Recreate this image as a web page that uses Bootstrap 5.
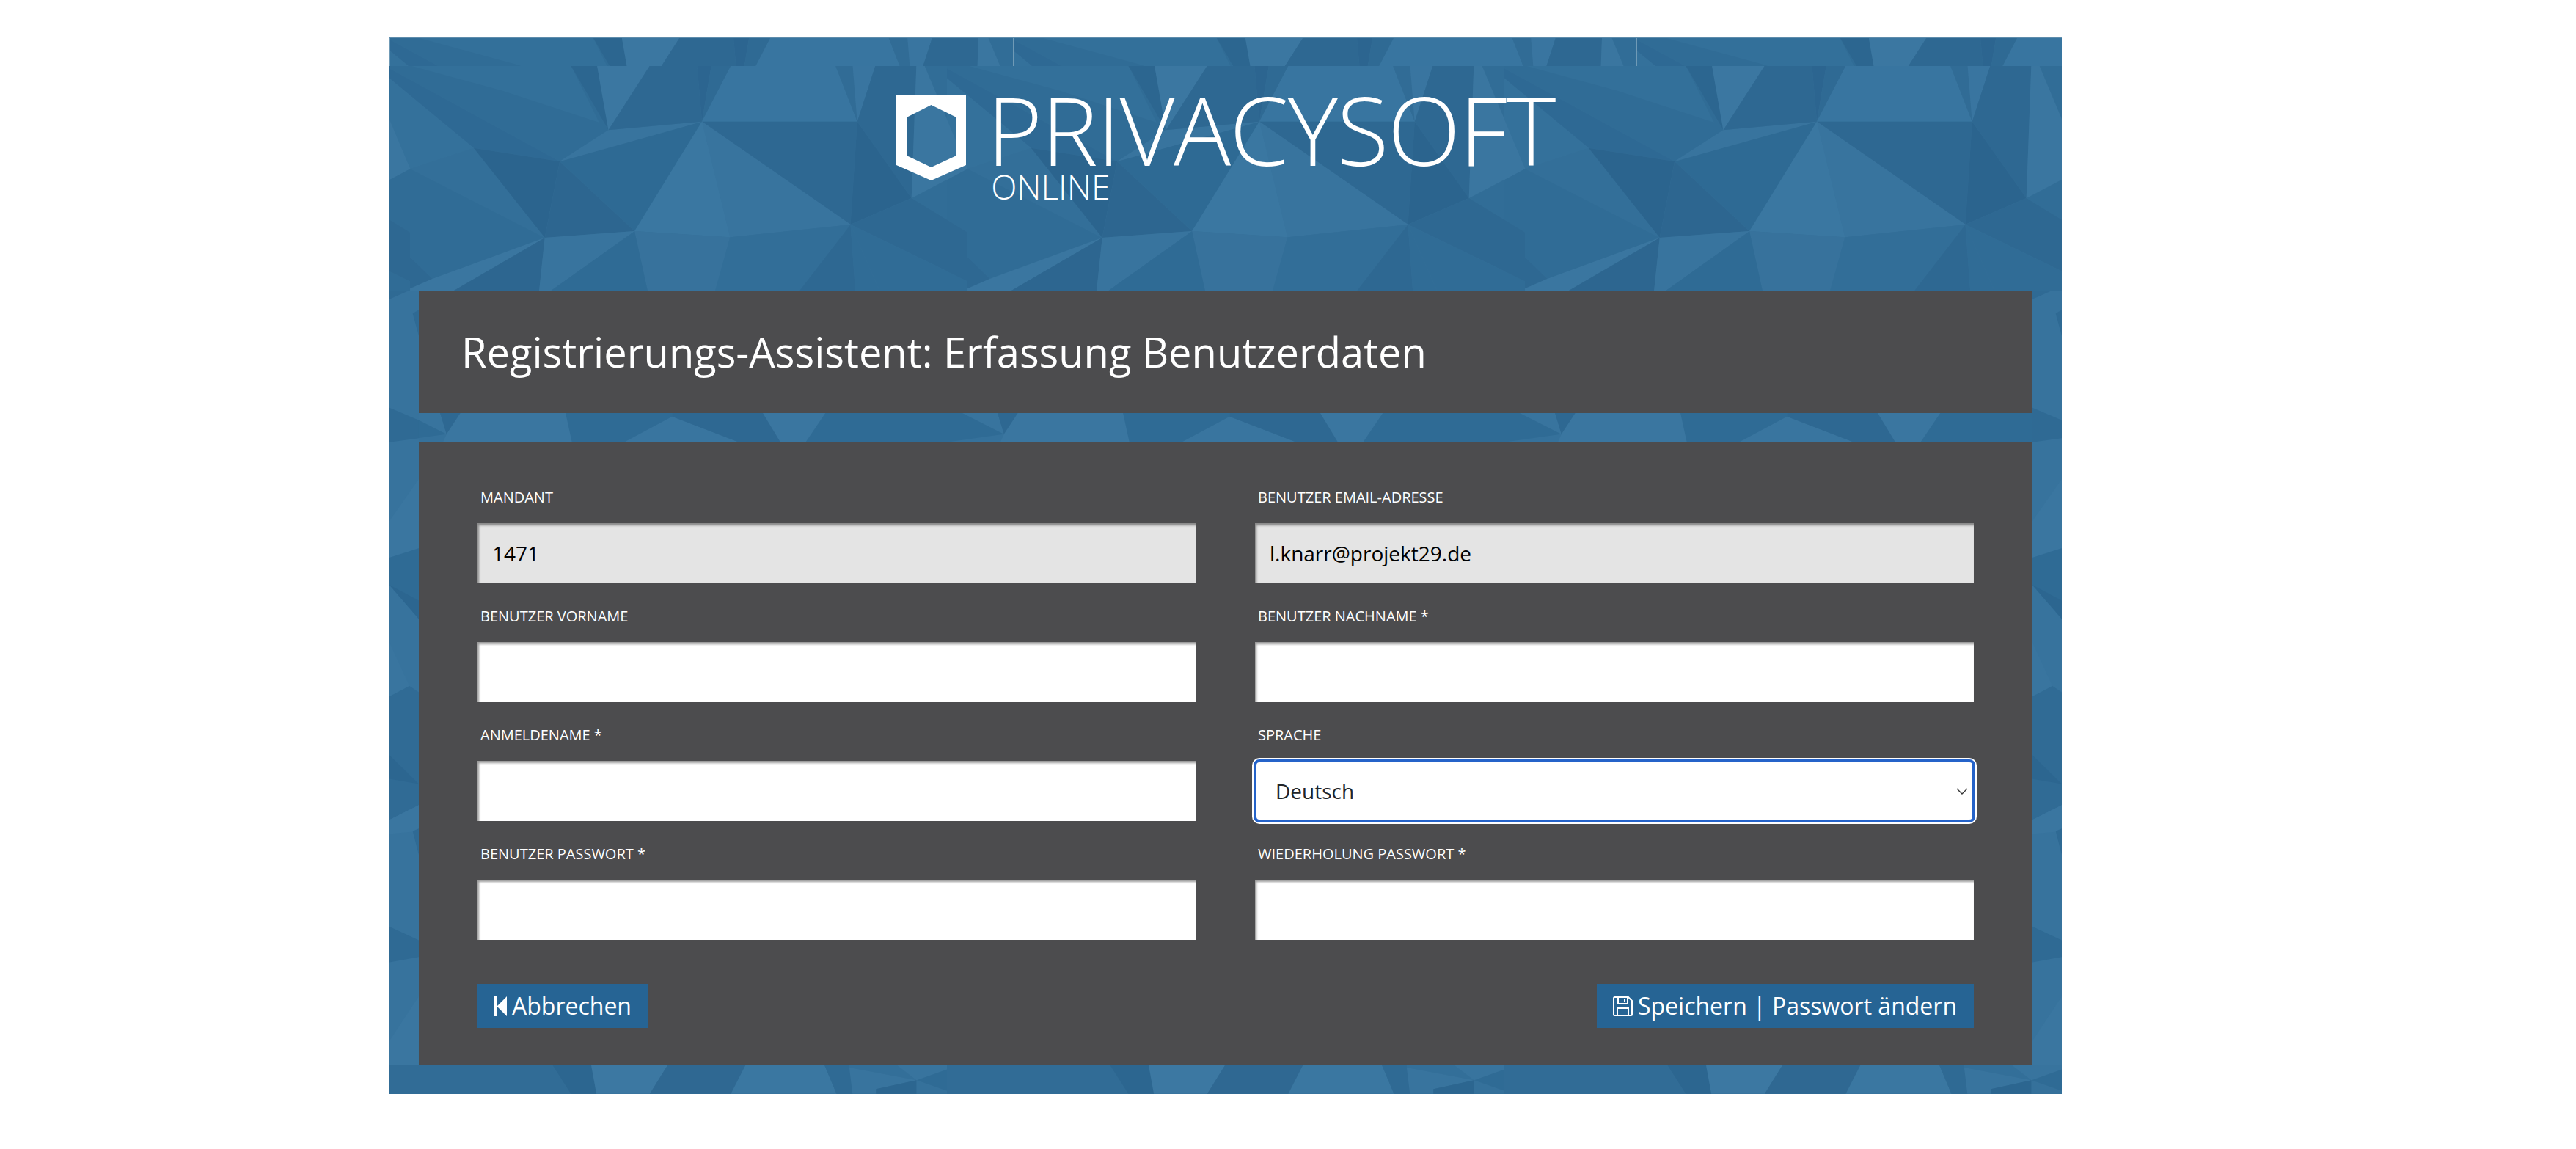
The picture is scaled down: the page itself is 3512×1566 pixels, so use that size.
<!DOCTYPE html>
<html lang="de">
<head>
  <title>Privacysoft Online - Registrierung</title>
  <meta charset="utf-8">
  <meta name="viewport" content="width=device-width, initial-scale=1">
  <link href="https://cdn.jsdelivr.net/npm/bootstrap@5.3.3/dist/css/bootstrap.min.css" rel="stylesheet">
  <script src="https://cdn.jsdelivr.net/npm/bootstrap@5.3.3/dist/js/bootstrap.bundle.min.js"></script>
  <style>
    body {
      background: #fff;
      font-family: "Open Sans", "Noto Sans", sans-serif;
    }
    .reg-shell {
      position: relative;
      width: 2280px;
      margin: 50px 0 0 531px;
      padding: 0 40px 40px;
      background: #316d97;
    }
    .reg-bg {
      position: absolute;
      top: 0;
      left: 0;
      display: block;
    }
    .reg-head {
      position: relative;
      height: 346px;
      padding-top: 80px;
    }
    .logo-shield {
      width: 95px;
      height: 116px;
      margin-right: 28px;
    }
    .logo-main {
      font-size: 130px;
      font-weight: 300;
      line-height: 1;
      color: #fff;
      margin-top: -19px;
      letter-spacing: -1.6px;
    }
    .logo-sub {
      font-size: 46px;
      font-weight: 300;
      line-height: 1;
      color: #fff;
      margin-top: -10px;
      margin-left: 6px;
    }
    .dark-panel {
      position: relative;
      background: #4c4c4e;
      color: #fff;
    }
    .title-panel {
      height: 167px;
      padding-left: 58px;
    }
    .title-panel h1 {
      font-size: 56px;
      font-weight: 400;
      margin: 0;
    }
    .form-panel {
      margin-top: 40px;
      padding: 60px 80px 50px;
    }
    .field-row {
      --bs-gutter-x: 80px;
      --bs-gutter-y: 30px;
    }
    .field-label {
      display: block;
      font-size: 20px;
      line-height: 30px;
      margin: 0 0 20px 4px;
      text-transform: uppercase;
    }
    .field-input,
    .field-input:focus {
      height: 82px;
      padding: 0 20px;
      font-size: 28px;
      color: #000;
      border: 0;
      border-radius: 0;
      background-color: #fff;
      box-shadow: inset 2px 3px 3px rgba(0, 0, 0, .4);
    }
    .field-input[readonly] {
      background-color: #e4e4e4;
    }
    .field-select,
    .field-select:focus {
      height: 82px;
      padding: 0 28px;
      font-size: 28px;
      color: #212529;
      border: 0;
      border-radius: 6px;
      background-color: #fff;
      background-image: url("data:image/svg+xml,%3csvg xmlns='http://www.w3.org/2000/svg' viewBox='0 0 16 9'%3e%3cpath fill='none' stroke='%23333' stroke-width='1.4' d='M1 1l7 7 7-7'/%3e%3c/svg%3e");
      background-position: right 8px center;
      background-size: 16px 9px;
      outline: 4px solid #2563c9;
      outline-offset: -2px;
      box-shadow: 0 0 0 4px #fff;
    }
    .btn-row {
      margin-top: 60px;
    }
    .reg-btn {
      height: 60px;
      padding: 0 23px 0 22px;
      font-size: 32px;
      line-height: 1;
      color: #fff;
      background: #266494;
      border: 0;
      border-radius: 0;
    }
    .reg-btn:hover {
      color: #fff;
      background: #266494;
    }
    .reg-btn svg {
      margin-right: 7px;
    }
  </style>
</head>
<body>

<div class="reg-shell">
  <!-- Hintergrund: Polygon-Muster nachgezeichnet -->
  <svg class="reg-bg" width="2280" height="1441" viewBox="0 0 2280 1441" xmlns="http://www.w3.org/2000/svg" aria-hidden="true">
    <defs>
      <g id="polyTile">
        <polygon fill="#306c96" points="0,120 485,120 585,382 455,510 0,130"/>
        <polygon fill="#33709a" points="60,120 485,120 560,350 300,220"/>
        <polygon fill="#2e6994" points="0,130 455,510 225,455 0,170"/>
        <polygon fill="#34719b" points="0,170 225,455 55,540 0,350"/>
        <polygon fill="#3a76a0" points="0,350 55,540 0,585"/>
        <polygon fill="#336f99" points="225,455 415,822 55,540"/>
        <polygon fill="#2b648e" points="225,455 455,510 415,822"/>
        <polygon fill="#2d6690" points="455,510 655,795 415,822"/>
        <polygon fill="#2e6a94" points="455,510 835,347 655,795"/>
        <polygon fill="#38749e" points="455,510 585,382 835,347"/>
        <polygon fill="#2c6690" points="485,120 555,120 585,382"/>
        <polygon fill="#3b77a1" points="555,120 695,120 585,382"/>
        <polygon fill="#2e6892" points="695,120 822,120 835,347 585,382"/>
        <polygon fill="#2c6590" points="822,120 860,120 835,347"/>
        <polygon fill="#2f6a94" points="860,120 912,120 835,347"/>
        <polygon fill="#3875a0" points="912,120 1192,120 1250,347 835,347"/>
        <polygon fill="#316c96" points="1192,120 1238,120 1250,347"/>
        <polygon fill="#3975a0" points="1238,120 1298,120 1250,347"/>
        <polygon fill="#2e6892" points="1298,120 1408,120 1395,660 1250,347"/>
        <polygon fill="#2e6892" points="835,347 1250,347 1232,768"/>
        <polygon fill="#2b648e" points="1250,347 1395,660 1232,768"/>
        <polygon fill="#38749e" points="835,347 1232,768 910,820"/>
        <polygon fill="#3a77a1" points="835,347 910,820 655,795"/>
        <polygon fill="#37729c" points="655,795 910,820 870,1040 690,1040"/>
        <polygon fill="#326e98" points="910,820 1232,768 1095,1040 870,1040"/>
        <polygon fill="#2e6892" points="1232,768 1245,1040 1095,1040"/>
        <polygon fill="#306c96" points="1232,768 1310,1040 1245,1040"/>
        <polygon fill="#2e6892" points="1232,768 1395,660 1545,800 1545,1000"/>
        <polygon fill="#306c96" points="1232,768 1545,1000 1545,1040 1310,1040"/>
        <polygon fill="#3a76a0" points="1408,120 1430,120 1545,540 1395,660"/>
        <polygon fill="#306c96" points="0,585 55,540 415,822 115,990 0,820"/>
        <polygon fill="#2e6892" points="0,820 115,990 40,1040 0,1040"/>
        <polygon fill="#3a76a0" points="115,990 415,822 170,1040 40,1040"/>
        <polygon fill="#2d6690" points="170,1040 415,822 400,1040"/>
        <polygon fill="#38749e" points="415,822 655,795 430,1040 400,1040"/>
        <polygon fill="#2f6b95" points="430,1040 655,795 690,1040"/>
      </g>
      <pattern id="tileInner" patternUnits="userSpaceOnUse" x="0" y="40" width="760" height="306">
        <g transform="scale(.5102 .3333) translate(0 -120)">
          <use href="#polyTile"/>
          <use href="#polyTile" x="-1490"/>
        </g>
      </pattern>
      <pattern id="tileOuter" patternUnits="userSpaceOnUse" x="0" y="0" width="850" height="342">
        <g transform="scale(.5704 .3727) translate(0 -120)">
          <use href="#polyTile"/>
          <use href="#polyTile" x="-1490"/>
        </g>
        <rect x="0" y="0" width="1" height="40" fill="#6f9ab6"/>
      </pattern>
      <pattern id="tileGap" patternUnits="userSpaceOnUse" x="0" y="513" width="760" height="40">
        <g transform="scale(.7273 .3333) translate(0 -24)">
          <rect width="1045" height="170" fill="#2f6b95"/>
          <polygon fill="#38749e" points="29,24 95,24 107,110"/>
          <polygon fill="#35719b" points="0,143 107,110 100,143"/>
          <polygon fill="#2e6892" points="95,24 133,24 107,110"/>
          <polygon fill="#3a76a0" points="133,24 330,24 342,143 100,143 107,110"/>
          <polygon fill="#39759f" points="530,38 655,143 440,143"/>
          <polygon fill="#2e6892" points="530,24 700,24 733,143 655,143 530,38"/>
          <polygon fill="#3a76a0" points="700,24 817,24 780,143 733,143"/>
        </g>
      </pattern>
      <pattern id="tileFoot" patternUnits="userSpaceOnUse" x="0" y="1401" width="760" height="40">
        <g transform="scale(.7273 .3333) translate(0 -18)">
          <rect width="1045" height="170" fill="#2f6b95"/>
          <polygon fill="#316c96" points="0,18 305,18 340,137 0,137"/>
          <polygon fill="#2c6690" points="305,18 378,18 388,137 340,137"/>
          <polygon fill="#3c78a2" points="378,18 522,18 488,137 388,137"/>
          <polygon fill="#2f6892" points="522,18 668,18 640,137 488,137"/>
          <polygon fill="#3a77a1" points="668,18 815,18 838,137 640,137"/>
          <polygon fill="#2f6a94" points="815,18 862,18 868,137 838,137"/>
          <polygon fill="#336f99" points="862,18 950,18 988,82 862,30"/>
          <polygon fill="#38749e" points="862,30 988,82 912,118 912,137 868,137"/>
          <polygon fill="#38749e" points="950,18 1070,18 988,82"/>
          <polygon fill="#2c6690" points="912,118 988,82 988,137 912,137"/>
          <polygon fill="#35719b" points="988,82 1060,137 988,137"/>
        </g>
      </pattern>
      <g id="sideBand" transform="translate(-11 0) scale(.3333 .7143)">
        <rect x="33" y="0" width="120" height="1560" fill="#37739d"/>
        <polygon fill="#2f6a94" points="33,0 153,0 33,25"/>
        <polygon fill="#2f6a94" points="128,52 153,45 153,95"/>
        <polygon fill="#2f6a94" points="33,232 153,256 153,290 33,298"/>
        <polygon fill="#3a76a0" points="33,448 153,368 153,500 33,518"/>
        <polygon fill="#2f6b95" points="33,518 153,500 153,635 33,570"/>
        <polygon fill="#2c6690" points="33,570 153,600 153,635"/>
        <polygon fill="#39759f" points="33,680 115,763 33,783"/>
        <polygon fill="#306b95" points="33,783 115,763 153,775 153,990 33,1018"/>
        <polygon fill="#2c6690" points="33,895 153,950 33,940"/>
        <polygon fill="#3a76a0" points="33,1018 153,990 153,1040 33,1045"/>
        <polygon fill="#2f6a94" points="128,1040 153,1035 153,1085"/>
        <polygon fill="#2f6a94" points="33,1222 153,1248 153,1280 33,1290"/>
        <polygon fill="#3a76a0" points="33,1440 153,1355 153,1490 33,1508"/>
        <polygon fill="#2f6b95" points="33,1508 153,1490 153,1560 33,1560"/>
      </g>
    </defs>
    <use href="#sideBand" x="0" y="340"/>
    <use href="#sideBand" x="2240" y="340"/>
    <rect x="0" y="0" width="2280" height="40" fill="url(#tileOuter)"/>
    <rect x="0" y="0" width="2280" height="2" fill="#5f8dac"/>
    <rect x="0" y="40" width="2280" height="306" fill="url(#tileInner)"/>
    <rect x="40" y="513" width="2200" height="40" fill="url(#tileGap)"/>
    <rect x="0" y="1401" width="2280" height="40" fill="url(#tileFoot)"/>
  </svg>

  <div class="reg-head d-flex justify-content-center align-items-start">
    <svg class="logo-shield flex-shrink-0" viewBox="0 0 95 116" xmlns="http://www.w3.org/2000/svg">
      <path fill="#fff" fill-rule="evenodd" d="M0 0H95V95L47.6 116 0 95ZM47.6 13 14 30V82L47.6 98 82 82V30Z"/>
    </svg>
    <div>
      <div class="logo-main">PRIVACYSOFT</div>
      <div class="logo-sub">ONLINE</div>
    </div>
  </div>

  <div class="dark-panel title-panel d-flex align-items-center">
    <h1>Registrierungs-Assistent: Erfassung Benutzerdaten</h1>
  </div>

  <form class="dark-panel form-panel">
    <div class="row field-row">
      <div class="col-6">
        <label class="field-label">Mandant</label>
        <input class="form-control field-input" type="text" value="1471" readonly>
      </div>
      <div class="col-6">
        <label class="field-label">Benutzer Email-Adresse</label>
        <input class="form-control field-input" type="text" value="l.knarr@projekt29.de" readonly>
      </div>
      <div class="col-6">
        <label class="field-label">Benutzer Vorname</label>
        <input class="form-control field-input" type="text">
      </div>
      <div class="col-6">
        <label class="field-label">Benutzer Nachname *</label>
        <input class="form-control field-input" type="text">
      </div>
      <div class="col-6">
        <label class="field-label">Anmeldename *</label>
        <input class="form-control field-input" type="text">
      </div>
      <div class="col-6">
        <label class="field-label">Sprache</label>
        <select class="form-select field-select">
          <option>Deutsch</option>
          <option>English</option>
        </select>
      </div>
      <div class="col-6">
        <label class="field-label">Benutzer Passwort *</label>
        <input class="form-control field-input" type="password">
      </div>
      <div class="col-6">
        <label class="field-label">Wiederholung Passwort *</label>
        <input class="form-control field-input" type="password">
      </div>
    </div>
    <div class="btn-row d-flex justify-content-between">
      <button type="button" class="btn reg-btn d-flex align-items-center">
        <svg width="18" height="27" viewBox="0 0 18 27" xmlns="http://www.w3.org/2000/svg"><path fill="#fff" d="M0 0H4V27H0ZM18 0V27L4.5 13.5Z"/></svg>Abbrechen
      </button>
      <button type="button" class="btn reg-btn d-flex align-items-center">
        <svg width="27" height="27" viewBox="0 0 27 27" xmlns="http://www.w3.org/2000/svg"><g fill="none" stroke="#fff" stroke-width="2"><path d="M2.5 1H21L26 6V24.5A1.5 1.5 0 0 1 24.5 26H2.5A1.5 1.5 0 0 1 1 24.5V2.5A1.5 1.5 0 0 1 2.5 1Z"/><path d="M7 1V10H20V1"/><path d="M16 3V8"/><path d="M6 26V16H21V26"/></g></svg>Speichern | Passwort ändern
      </button>
    </div>
  </form>
</div>

</body>
</html>
